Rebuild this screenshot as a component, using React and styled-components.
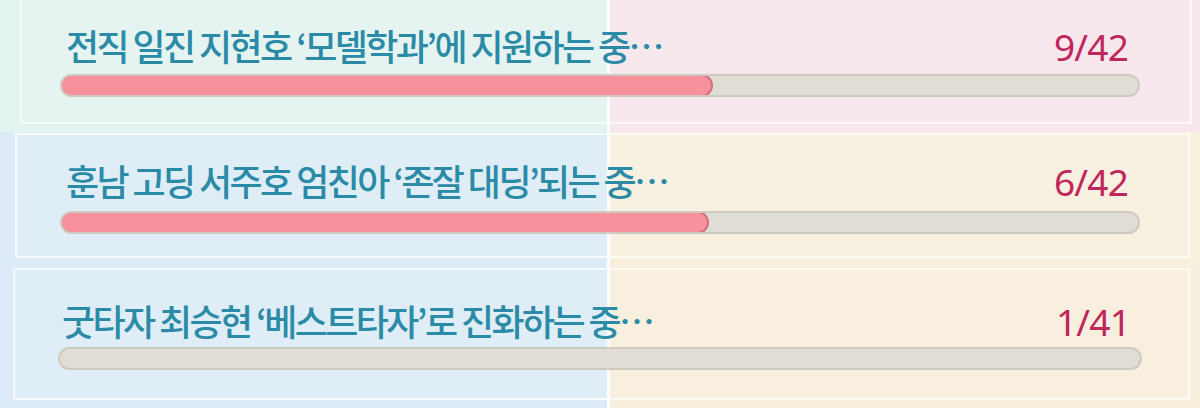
import styled, { createGlobalStyle } from 'styled-components';

const GlobalStyle = createGlobalStyle`
  html, body {
    margin: 0;
    padding: 0;
    background: #e4eef4;
  }
  body {
    font-family: "Noto Sans CJK KR", "Noto Sans", sans-serif;
  }
`;

const Page = styled.div`
  width: 1200px;
  height: 408px;
  overflow: hidden;
  display: flex;
  flex-direction: column;
`;

const Band = styled.div`
  height: ${(p) => p.$height}px;
  display: flex;
  flex-direction: column;
  background: linear-gradient(
    90deg,
    ${(p) => p.$left} 0,
    ${(p) => p.$left} 607px,
    rgba(255, 255, 255, 0.9) 607px,
    rgba(255, 255, 255, 0.9) 610px,
    ${(p) => p.$right} 610px,
    ${(p) => p.$right} 100%
  );
`;

const Card = styled.div`
  box-sizing: border-box;
  height: ${(p) => p.$height}px;
  margin: ${(p) => p.$margin};
  padding: ${(p) => p.$padding};
  border: 2px solid rgba(255, 255, 255, 0.7);
  background: rgba(255, 255, 255, 0.1);
  display: flex;
  flex-direction: column;
`;

const TitleRow = styled.div`
  display: flex;
  align-items: baseline;
  justify-content: space-between;
  padding: 0 12px 0 ${(p) => p.$indent}px;
  margin-bottom: ${(p) => p.$gap}px;
`;

const Title = styled.span`
  font-size: 36px;
  line-height: 40px;
  font-weight: 500;
  letter-spacing: -2.6px;
  color: #2b8ba6;
  white-space: nowrap;
`;

const Count = styled.span`
  font-family: "Noto Sans", "Roboto", sans-serif;
  font-size: 37px;
  line-height: 40px;
  font-weight: 400;
  letter-spacing: -0.8px;
  color: #c0265b;
`;

const Track = styled.div`
  box-sizing: border-box;
  height: 23px;
  border-radius: 12px;
  background: #e0ddd6;
  border: 2px solid #cfcac0;
  overflow: hidden;
  display: flex;
`;

const Fill = styled.div`
  box-sizing: border-box;
  margin: -2px 0 -2px -2px;
  height: 23px;
  border-radius: 12px;
  background: #f7919c;
  border: 2px solid #d66d7c;
`;

const quests = [
  {
    title: '전직 일진 지현호 ‘모델학과’에 지원하는 중…',
    count: '9/42',
    fill: 60.7,
    band: { height: 132, left: '#e3f3ef', right: '#f7e6eb' },
    card: { height: 128, margin: '-4px 8px 0 20px', padding: '27px 50px 0 38px' },
    indent: 6,
    gap: 7,
  },
  {
    title: '훈남 고딩 서주호 엄친아 ‘존잘 대딩’되는 중…',
    count: '6/42',
    fill: 60.3,
    band: { height: 134, left: '#dcebf7', right: '#f8efdd' },
    card: { height: 125, margin: '1px 10px 0 15px', padding: '25px 48px 0 43px' },
    indent: 6,
    gap: 9,
  },
  {
    title: '굿타자 최승현 ‘베스트타자’로 진화하는 중…',
    count: '1/41',
    fill: 0,
    band: { height: 142, left: '#dcebf7', right: '#f8eedc' },
    card: { height: 132, margin: '2px 10px 0 13px', padding: '30px 46px 0 43px' },
    indent: 4,
    gap: 5,
  },
];

const QuestCard = ({ quest }) => (
  <Band $height={quest.band.height} $left={quest.band.left} $right={quest.band.right}>
    <Card $height={quest.card.height} $margin={quest.card.margin} $padding={quest.card.padding}>
      <TitleRow $indent={quest.indent} $gap={quest.gap}>
        <Title>{quest.title}</Title>
        <Count>{quest.count}</Count>
      </TitleRow>
      <Track>{quest.fill > 0 && <Fill style={{ width: `${quest.fill}%` }} />}</Track>
    </Card>
  </Band>
);

export default function App() {
  return (
    <>
      <GlobalStyle />
      <Page>
        {quests.map((q) => (
          <QuestCard key={q.count + q.title} quest={q} />
        ))}
      </Page>
    </>
  );
}
